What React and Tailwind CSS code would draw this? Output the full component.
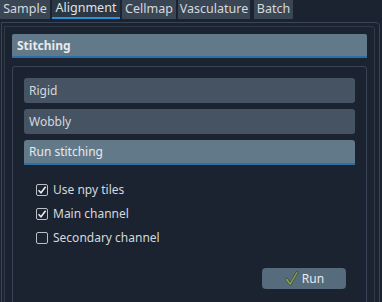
import { useState } from "react";

const tabs = [
  { name: "Sample", w: "w-[50px]" },
  { name: "Alignment", w: "w-[68px]" },
  { name: "Cellmap", w: "w-[54px]" },
  { name: "Vasculature", w: "w-[72px]" },
  { name: "Batch", w: "w-[39px]" },
];

function CheckRow({ label, checked, onToggle }) {
  return (
    <label
      className="flex items-center gap-[5px] h-[24px] cursor-pointer"
      onClick={onToggle}
    >
      <span className="w-[12px] h-[12px] border border-[#b9c0c7] rounded-[2px] flex items-center justify-center bg-[#1c2430]">
        {checked && (
          <svg width="10" height="10" viewBox="0 0 10 10">
            <path
              d="M1.5 5.2 L4 7.8 L8.6 1.8"
              fill="none"
              stroke="#e8ecef"
              strokeWidth="1.6"
            />
          </svg>
        )}
      </span>
      <span className="text-[12px] text-[#d4d9de]">{label}</span>
    </label>
  );
}

export default function App() {
  const [active] = useState("Alignment");
  const [checks, setChecks] = useState({
    npy: true,
    main: true,
    secondary: false,
  });

  const toggle = (k) => setChecks((c) => ({ ...c, [k]: !c[k] }));

  return (
    <div
      className="w-[382px] h-[302px] overflow-hidden bg-[#1b2330] text-[#d4d9de]"
      style={{ fontFamily: '"Noto Sans", "Open Sans", sans-serif' }}
    >
      {/* ──── Tabs ──── */}
      <div className="flex h-[19px] gap-[2px]">
        {tabs.map((t) => (
          <div
            key={t.name}
            className={`${t.w} h-[19px] flex items-center justify-center text-[12.5px] leading-none ${
              t.name === active
                ? "bg-[#2c3744] border-b-2 border-[#2d8fd9] text-[#dfe3e7]"
                : "bg-[#3b4655] text-[#d4d9de]"
            } ${t.name === "Batch" ? "ml-[2px]" : ""}`}
          >
            {t.name}
          </div>
        ))}
      </div>

      {/* ──── Pane ──── */}
      <div className="mt-[3px] ml-[1px] w-[379px] h-[300px] border border-[#3a4657] rounded-tr-[4px]">
        <div className="mt-[3px] ml-[2px] w-[371px] h-[290px] border border-[#2f3a48] rounded-tr-[3px] pl-[7px] pt-[7px]">
          {/* Stitching header */}
          <div className="w-[355px] h-[24px] bg-[#627989] border-b-2 border-[#2b6fa6] rounded-t-[2px] flex items-center pl-[5px] pt-[2px]">
            <span className="text-[12px] font-bold text-[#e6eaed]">
              Stitching
            </span>
          </div>

          {/* Group content */}
          <div className="mt-[8px] w-[355px] h-[260px] border border-[#3a4657] rounded-[3px] px-[11px] pt-[11px]">
            <div className="flex flex-col gap-[6px]">
              <div className="h-[25px] bg-[#465363] rounded-[3px] flex items-center pl-[5px] text-[12px]">
                Rigid
              </div>
              <div className="h-[25px] bg-[#465363] rounded-[3px] flex items-center pl-[5px] text-[12px]">
                Wobbly
              </div>
              <div className="h-[25px] bg-[#627989] border-b-2 border-[#2b6fa6] rounded-t-[3px] flex items-center pl-[5px] text-[12px] text-[#e6eaed]">
                Run stitching
              </div>
            </div>

            <div className="mt-[13px] ml-[12px] flex flex-col">
              <CheckRow
                label="Use npy tiles"
                checked={checks.npy}
                onToggle={() => toggle("npy")}
              />
              <CheckRow
                label="Main channel"
                checked={checks.main}
                onToggle={() => toggle("main")}
              />
              <CheckRow
                label="Secondary channel"
                checked={checks.secondary}
                onToggle={() => toggle("secondary")}
              />
            </div>

            <div className="flex justify-end mt-[18px] pr-[9px]">
              <button className="w-[84px] h-[21px] bg-[#566b7b] rounded-[4px] flex items-center justify-center gap-[3px] text-[12px] text-[#e6eaed]">
                <svg width="15" height="17" viewBox="0 0 15 17">
                  <path
                    d="M1 9.5 L3.4 8 L6 12.2 L12.6 1.2 L14.4 2.2 L6.3 16 Z"
                    fill="#819e5a"
                    stroke="#3c4d2e"
                    strokeWidth="0.8"
                    strokeLinejoin="round"
                  />
                </svg>
                Run
              </button>
            </div>
          </div>
        </div>
      </div>
    </div>
  );
}
